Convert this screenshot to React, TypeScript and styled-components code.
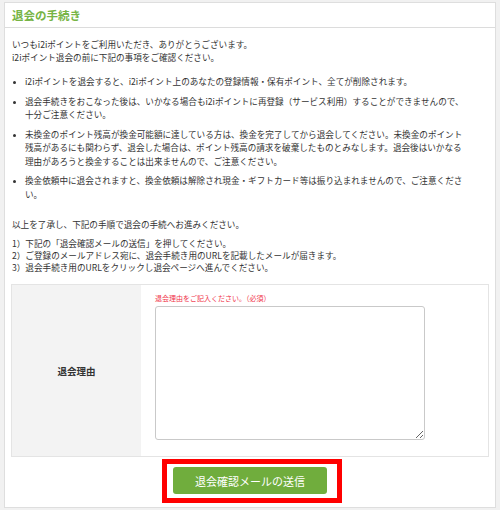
import React from 'react';
import styled, { createGlobalStyle } from 'styled-components';

const GlobalStyle = createGlobalStyle`
  html, body {
    margin: 0;
    padding: 0;
    background: #f1f1f1;
  }
  body {
    font-family: "Noto Sans CJK JP", "Noto Sans", sans-serif;
    color: #333;
  }
`;

const Panel = styled.section`
  width: 490px;
  margin: 2px 0 0 4px;
  background: #fff;
  border: 1px solid #dedede;
`;

const Header = styled.h2`
  margin: 0;
  height: 24px;
  padding-left: 7px;
  border-bottom: 1px solid #dcdcdc;
  font-size: 11.5px;
  line-height: 24px;
  font-weight: 700;
  color: #76b445;
`;

const Body = styled.div`
  padding: 10px 6px 4px 7px;
  font-size: 8.6px;
`;

const Paragraph = styled.p<{ $lineHeight?: number; $gap?: number }>`
  margin: 0 0 ${({ $gap }) => $gap ?? 0}px;
  line-height: ${({ $lineHeight }) => $lineHeight ?? 13}px;
`;

const NoticeList = styled.ul`
  margin: 11px 0 17px;
  padding: 0 0 0 13px;
  width: 442px;
`;

const NoticeItem = styled.li`
  line-height: 13.5px;
  margin-bottom: 6px;
  list-style: disc;

  &::marker {
    font-size: 7px;
  }
`;

const FormTable = styled.div`
  display: grid;
  grid-template-columns: 129px 1fr;
  width: 476px;
  margin: 11px 0 0 -1px;
  border: 1px solid #e4e4e4;
`;

const LabelCell = styled.div`
  display: flex;
  align-items: center;
  justify-content: center;
  background: #f3f3f3;
  font-size: 9.5px;
  font-weight: 700;
  color: #333;
`;

const FieldCell = styled.div`
  padding: 8px 14px 16px 14px;
`;

const Required = styled.div`
  font-size: 7px;
  line-height: 10px;
  color: #f0334a;
  margin-bottom: 3px;
`;

const ReasonInput = styled.textarea`
  display: block;
  box-sizing: border-box;
  width: 270px;
  height: 134px;
  border: 1px solid #c9c9c9;
  border-radius: 3px;
  resize: both;
  font: inherit;
`;

const ActionRow = styled.div`
  display: flex;
  justify-content: center;
  margin-top: 2px;
  padding-left: 3px;
`;

const Highlight = styled.div`
  border: 5px solid #ff0000;
  padding: 3px 10px 4px 6px;
`;

const SubmitButton = styled.button`
  width: 154px;
  height: 27px;
  border: none;
  border-radius: 3px;
  background: #70ad3d;
  color: #fff;
  font-family: "Noto Sans CJK JP", sans-serif;
  font-size: 11px;
  cursor: pointer;
`;

const notices = [
  'i2iポイントを退会すると、i2iポイント上のあなたの登録情報・保有ポイント、全てが削除されます。',
  '退会手続きをおこなった後は、いかなる場合もi2iポイントに再登録（サービス利用）することができませんので、十分ご注意ください。',
  '未換金のポイント残高が換金可能額に達している方は、換金を完了してから退会してください。未換金のポイント残高があるにも関わらず、退会した場合は、ポイント残高の請求を破棄したものとみなします。退会後はいかなる理由があろうと換金することは出来ませんので、ご注意ください。',
  '換金依頼中に退会されますと、換金依頼は解除され現金・ギフトカード等は振り込まれませんので、ご注意ください。',
];

const steps = [
  '1）下記の「退会確認メールの送信」を押してください。',
  '2）ご登録のメールアドレス宛に、退会手続き用のURLを記載したメールが届きます。',
  '3）退会手続き用のURLをクリックし退会ページへ進んでください。',
];

export default function App() {
  return (
    <>
      <GlobalStyle />
      <Panel>
        <Header>退会の手続き</Header>
        <Body>
          <Paragraph>
            いつもi2iポイントをご利用いただき、ありがとうございます。
            <br />
            i2iポイント退会の前に下記の事項をご確認ください。
          </Paragraph>
          <NoticeList>
            {notices.map(text => (
              <NoticeItem key={text}>{text}</NoticeItem>
            ))}
          </NoticeList>
          <Paragraph $lineHeight={12} $gap={7}>
            以上を了承し、下記の手順で退会の手続へお進みください。
          </Paragraph>
          <Paragraph $lineHeight={12}>
            {steps.map(step => (
              <React.Fragment key={step}>
                {step}
                <br />
              </React.Fragment>
            ))}
          </Paragraph>
          <FormTable>
            <LabelCell>退会理由</LabelCell>
            <FieldCell>
              <Required>退会理由をご記入ください。（必須）</Required>
              <ReasonInput />
            </FieldCell>
          </FormTable>
          <ActionRow>
            <Highlight>
              <SubmitButton type="button">退会確認メールの送信</SubmitButton>
            </Highlight>
          </ActionRow>
        </Body>
      </Panel>
    </>
  );
}
